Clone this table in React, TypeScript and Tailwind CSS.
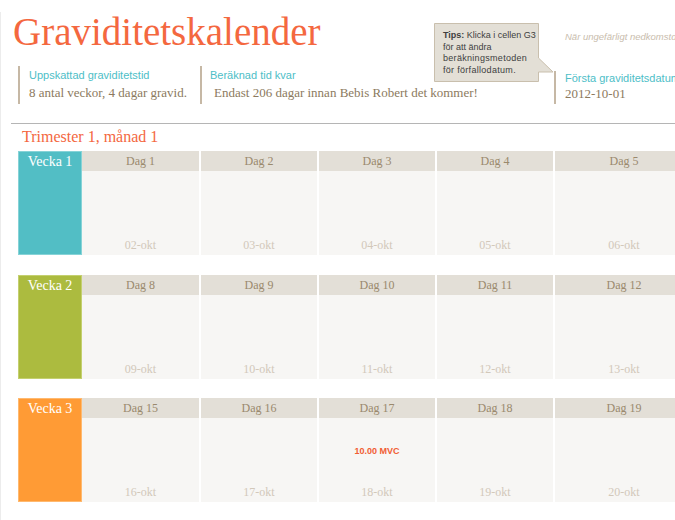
import React from 'react';

type Week = {
    label: string;
    color: string;
    days: { day: number; date: string; note?: string }[];
};

const weeks: Week[] = [
    {
        label: 'Vecka 1',
        color: 'bg-[#52bec5] border-[#86d3d7]',
        days: [
            { day: 1, date: '02-okt' },
            { day: 2, date: '03-okt' },
            { day: 3, date: '04-okt' },
            { day: 4, date: '05-okt' },
            { day: 5, date: '06-okt' },
        ],
    },
    {
        label: 'Vecka 2',
        color: 'bg-[#acbb3f] border-[#c4d06f]',
        days: [
            { day: 8, date: '09-okt' },
            { day: 9, date: '10-okt' },
            { day: 10, date: '11-okt' },
            { day: 11, date: '12-okt' },
            { day: 12, date: '13-okt' },
        ],
    },
    {
        label: 'Vecka 3',
        color: 'bg-[#ff9b35] border-[#ffb96f]',
        days: [
            { day: 15, date: '16-okt' },
            { day: 16, date: '17-okt' },
            { day: 17, date: '18-okt', note: '10.00 MVC' },
            { day: 18, date: '19-okt' },
            { day: 19, date: '20-okt' },
        ],
    },
];

// column widths as measured, last one runs past the window edge
const colWidths = ['w-[117px]', 'w-[116px] ml-[2px]', 'w-[116px] ml-[2px]', 'w-[116px] ml-[2px]', 'w-[138px] ml-[2px]'];

const serif = "font-['Liberation_Serif',serif]";
const sans = "font-['Liberation_Sans',Arial,sans-serif]";

const WeekRow: React.FC<{ week: Week; className?: string }> = ({ week, className }) => (
    <div className={`flex h-[104px] ml-[17px] ${className || ''}`}>
        <div className={`w-[64px] shrink-0 border ${week.color} text-center text-white text-[14px] leading-[20px] ${serif}`}>
            {week.label}
        </div>
        {week.days.map((d, i) => (
            <div key={d.day} className={`${colWidths[i]} shrink-0 flex flex-col`}>
                <div className={`h-[20px] bg-[#e3dfd7] text-center text-[12px] leading-[20px] text-[#9a896d] ${serif}`}>
                    Dag {d.day}
                </div>
                <div className="flex-1 bg-[#f7f6f4] flex flex-col">
                    {d.note && (
                        <div className={`pt-[27px] text-center text-[9px] font-bold text-[#f15d33] ${sans}`}>
                            {d.note}
                        </div>
                    )}
                    <div className={`mt-auto pb-[3px] text-center text-[12px] leading-[14px] text-[#d2c8ba] ${serif}`}>
                        {d.date}
                    </div>
                </div>
            </div>
        ))}
    </div>
);

const App: React.FC = () => {
    return (
        <div className="w-[675px] h-[520px] overflow-hidden bg-white relative">
            <div className="h-[511px] border-l border-b border-[#ececec]">
                {/* Title row */}
                <div className="flex h-[39px] mt-[12px] pl-[12px]">
                    <div className={`w-[552px] shrink-0 text-[39px] leading-[39px] text-[#f4683f] ${serif}`}>
                        Graviditetskalender
                    </div>
                    <div className={`mt-[19px] whitespace-nowrap italic text-[9.5px] leading-[12px] text-[#c9bdad] ${sans}`}>
                        När ungefärligt nedkomstdatum beräknas
                    </div>
                </div>

                {/* Info row */}
                <div className="flex mt-[15px]">
                    <div className="ml-[17px] w-[182px] shrink-0 h-[38px] border-l-2 border-[#c6b8a5] pl-[9px] pt-[3px]">
                        <div className={`text-[11px] leading-[13px] text-[#4dbec7] ${sans}`}>Uppskattad graviditetstid</div>
                        <div className={`mt-[2px] text-[13px] leading-[17px] text-[#8c7a5e] whitespace-nowrap ${serif}`}>
                            8 antal veckor, 4 dagar gravid.
                        </div>
                    </div>
                    <div className="w-[354px] shrink-0 h-[38px] border-l-2 border-[#c6b8a5] pl-[8px] pt-[3px]">
                        <div className={`text-[11px] leading-[13px] text-[#4dbec7] ${sans}`}>Beräknad tid kvar</div>
                        <div className={`mt-[2px] pl-[4px] text-[13px] leading-[17px] text-[#8c7a5e] whitespace-nowrap ${serif}`}>
                            Endast 206 dagar innan Bebis Robert det kommer!
                        </div>
                    </div>
                    <div className="mt-[5px] h-[33px] shrink-0 border-l-2 border-[#c6b8a5] pl-[9px] pt-[1px] whitespace-nowrap">
                        <div className={`text-[11px] leading-[13px] text-[#4dbec7] ${sans}`}>Första graviditetsdatum</div>
                        <div className={`text-[13px] leading-[17px] text-[#8c7a5e] ${serif}`}>2012-10-01</div>
                    </div>
                </div>

                <div className="mt-[19px] ml-[10px] h-px bg-[#b5b5b5]" />

                <div className={`mt-[4px] pl-[21px] text-[16px] leading-[18px] text-[#f4683f] ${serif}`}>
                    Trimester 1, månad 1
                </div>

                <div className="mt-[5px]">
                    <WeekRow week={weeks[0]} />
                    <WeekRow week={weeks[1]} className="mt-[20px]" />
                    <WeekRow week={weeks[2]} className="mt-[19px]" />
                </div>
            </div>

            {/* Tips callout */}
            <div className="absolute left-[434px] top-[23px] w-[120px] h-[59px]">
                <svg width="120" height="59" className="absolute inset-0">
                    <path
                        d="M0.5 0.5 H104.5 V35 L119 49 H104.5 V58.5 H0.5 Z"
                        fill="#e3dfd6"
                        stroke="#c9bfad"
                        strokeWidth="1"
                    />
                </svg>
                <div className={`relative pl-[9px] pt-[7px] text-[9px] leading-[11.7px] text-[#404040] whitespace-nowrap ${sans}`}>
                    <div><span className="font-bold">Tips:</span> Klicka i cellen G3</div>
                    <div>för att ändra</div>
                    <div className="tracking-[0.3px]">beräkningsmetoden</div>
                    <div className="tracking-[0.3px]">för förfallodatum.</div>
                </div>
            </div>
        </div>
    );
};

export default App;
